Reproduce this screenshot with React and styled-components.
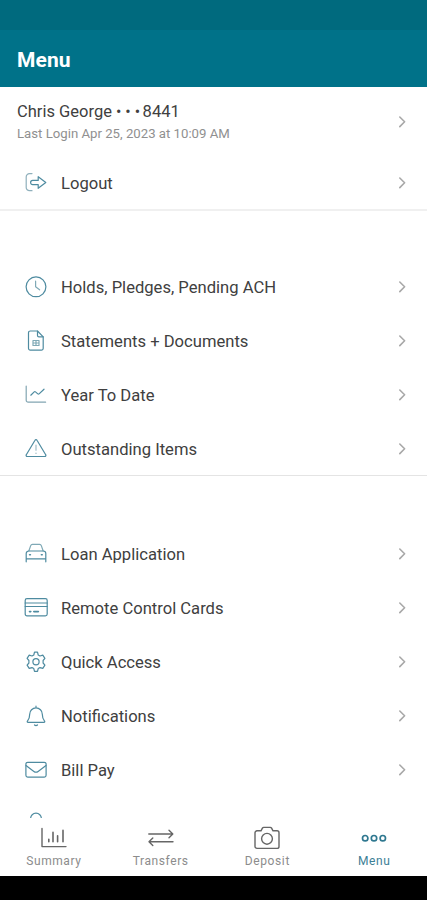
import React from 'react'
import styled, { createGlobalStyle } from 'styled-components'

const GlobalStyle = createGlobalStyle`
  * {
    box-sizing: border-box;
  }
  body {
    margin: 0;
    background: #000;
    font-family: Roboto, "Liberation Sans", sans-serif;
  }
`

const Style = {
  Screen: styled.div`
    width: 427px;
    height: 900px;
    display: flex;
    flex-direction: column;
    overflow: hidden;
    background: #fff;
  `,
  StatusBar: styled.div`
    flex: none;
    height: 30px;
    background: #006a7e;
  `,
  Header: styled.header`
    flex: none;
    height: 57px;
    padding: 2px 17px 0;
    display: flex;
    align-items: center;
    background: #007289;
  `,
  Title: styled.h1`
    margin: 0;
    font-weight: 700;
    font-size: 21px;
    line-height: 24px;
    letter-spacing: 0.1px;
    color: #fff;
  `,
  Content: styled.main`
    flex: 1;
    min-height: 0;
    overflow: hidden;
  `,
  Section: styled.section`
    padding-top: ${(props) => props.$top || 0}px;
    border-bottom: ${(props) => props.$line || 1}px solid ${(props) => (props.$line ? '#f0f0f0' : '#e4e4e4')};
    & > :last-child {
      margin-bottom: -1px;
    }
  `,
  Account: styled.div`
    height: 69px;
    padding: 0 20px 0 17px;
    display: flex;
    align-items: center;
    justify-content: space-between;
  `,
  AccountText: styled.div`
    padding-top: 3px;
  `,
  AccountName: styled.div`
    font-size: 16.5px;
    line-height: 22px;
    color: #404040;
  `,
  Dots: styled.span`
    margin: 0 -1.500px 0 4px;
    font-size: 16px;
    letter-spacing: 4px;
  `,
  LastLogin: styled.div`
    font-size: 13.2px;
    line-height: 22px;
    color: #909090;
  `,
  Row: styled.div`
    height: 54px;
    padding: 0 20px 0 24px;
    display: flex;
    align-items: center;
  `,
  Label: styled.span`
    flex: 1;
    margin-left: 13px;
    padding-top: 1px;
    font-size: 16.600px;
    line-height: 22px;
    color: #404040;
  `,
  Icon: styled.svg`
    flex: none;
    display: block;
    width: ${(props) => props.$width || 24}px;
    height: 24px;
    fill: none;
    stroke: ${(props) => props.$color || '#4e8ba0'};
    stroke-width: ${(props) => props.$stroke || 1.2};
    stroke-linecap: round;
    stroke-linejoin: round;
  `,
  TabBar: styled.nav`
    flex: none;
    height: 58px;
    display: grid;
    grid-template-columns: repeat(4, 1fr);
    background: #fff;
  `,
  Tab: styled.div`
    padding: 8px 0 0 1px;
    display: flex;
    flex-direction: column;
    align-items: center;
    font-size: 12px;
    line-height: 14px;
    letter-spacing: 0.6px;
    color: ${(props) => (props.$active ? '#3d8096' : '#8c8c8c')};
    span {
      margin-top: 4px;
    }
  `,
  SystemBar: styled.div`
    flex: none;
    height: 24px;
    background: #000;
  `,
}

const icons = {
  logout: (
    <>
      <path d="M8 2.6H5.5A3.3 3.3 0 0 0 2.2 6v10.4a3.3 3.3 0 0 0 3.3 3.3H8" stroke="#8fb0bc" />
      <path d="M8.7 9.4h5.5V5.7l7.6 5.8-7.6 5.8v-3.7H8.7a2.1 2.1 0 0 1 0-4.2z" />
    </>
  ),
  clock: (
    <>
      <circle cx="12" cy="11.8" r="9.9" />
      <path d="M11.6 6.2v5.6l4 3" stroke="#7fa9b6" />
    </>
  ),
  document: (
    <>
      <path d="M6.3 2h7.2l5.7 5.8v11.5a1.8 1.8 0 0 1-1.8 1.8H6.3a1.8 1.8 0 0 1-1.8-1.8V3.8A1.8 1.8 0 0 1 6.3 2z" />
      <path d="M13.5 2v4.4a1.4 1.4 0 0 0 1.4 1.4h4.3" />
      <path d="M9 11.5h6v5H9zM9 14h6M12 11.500v5" stroke="#7fa9b6" />
    </>
  ),
  chart: (
    <>
      <path d="M2.2 3v14.2a2 2 0 0 0 2 2h17.4" stroke="#82a5b2" />
      <path d="M6.800 12.200l3.400-3.300a1 1 0 0 1 1.300 0l2.300 2a1 1 0 0 0 1.300 0L20 6.200" />
    </>
  ),
  warning: (
    <>
      <path d="M11 3.3a1.15 1.15 0 0 1 2 0l8.7 14.4a1.15 1.15 0 0 1-1 1.8H3.3a1.15 1.15 0 0 1-1-1.8z" />
      <path d="M12 8.2v5M12 16v.4" stroke="#9dbcc6" />
    </>
  ),
  car: (
    <>
      <path d="M4.800 9l1.900-5.400a1.800 1.800 0 0 1 1.700-1.200h7.200a1.800 1.800 0 0 1 1.700 1.200L19.200 9" stroke="#7fa9b6" />
      <path d="M2.200 19.800v-8.200A2.600 2.600 0 0 1 4.800 9h14.400a2.600 2.600 0 0 1 2.600 2.600v8.200M2.200 16.800h19.600" />
      <path d="M5.600 12.700h.8M17.400 12.700h.8" strokeWidth="1.6" />
    </>
  ),
  card: (
    <>
      <rect x="1.2" y="2.6" width="22" height="17.2" rx="1.8" />
      <path d="M1.2 7h22M1.2 10.5h22" />
      <path d="M5.5 15.6h1.3M9.8 15.6h4.6" strokeWidth="1.6" />
    </>
  ),
  gear: (
    <>
      <circle cx="12" cy="11.8" r="3.1" />
      <path d="M10.5 2.2h3l.7 2.8 1.8 1 2.8-.8 2.1 3.2-1.8 2.1v2.5l1.8 2.2-2.1 3.2-2.8-.8-1.8 1-.7 2.8h-3l-.7-2.800-1.800-1-2.800.800-2.100-3.200L4.900 13v-2.500L3.100 8.400l2.100-3.200L8 6l1.800-1z" />
    </>
  ),
  bell: (
    <>
      <path d="M12 2.200v1.200M3.400 17.200c1.500-1.800 2.300-2.700 2.300-7a6.300 6.300 0 0 1 12.600 0c0 4.300.8 5.200 2.300 7 .4.6.1 1.200-.6 1.200H4c-.7 0-1-.6-.6-1.200z" />
      <path d="M10.500 21a1.800 1 0 0 0 3 0" />
    </>
  ),
  mail: (
    <>
      <rect x="1.9" y="4.3" width="20.2" height="14.8" rx="1.8" />
      <path d="M2 7.600l7.900 5.800a3.500 3.500 0 0 0 4.200 0L22 7.600" />
    </>
  ),
  person: (
    <>
      <circle cx="12" cy="6.600" r="5.400" />
      <path d="M3 22a9 9 0 0 1 18 0" />
    </>
  ),
}

const tabIcons = {
  summary: (
    <>
      <path d="M1 2.4v18.2h24" />
      <path d="M7.8 13.2v2.6M12 6.4v9.4M16.6 9.8v6M22 4.4v11.4" strokeWidth="1.6" />
    </>
  ),
  transfers: (
    <path d="M.8 8h23.8M21 4.200L24.800 8 21 11.800M25 15.800H1.200M4.800 12L1 15.800l3.800 3.800" />
  ),
  deposit: (
    <>
      <path d="M3 4.8h4l1.4-2.6a1.6 1.6 0 0 1 1.4-.8h6.400a1.6 1.6 0 0 1 1.4.8L19 4.8h4a2 2 0 0 1 2 2v13.600a2 2 0 0 1-2 2H3a2 2 0 0 1-2-2V6.800a2 2 0 0 1 2-2z" />
      <circle cx="13" cy="12.8" r="5.4" />
    </>
  ),
  menu: (
    <>
      <circle cx="4.2" cy="12.2" r="2.7" />
      <circle cx="13" cy="12.2" r="2.7" />
      <circle cx="21.8" cy="12.2" r="2.7" />
    </>
  ),
}

const accountItems = [
  { icon: 'clock', label: 'Holds, Pledges, Pending ACH' },
  { icon: 'document', label: 'Statements + Documents' },
  { icon: 'chart', label: 'Year To Date' },
  { icon: 'warning', label: 'Outstanding Items' },
]

const serviceItems = [
  { icon: 'car', label: 'Loan Application' },
  { icon: 'card', label: 'Remote Control Cards' },
  { icon: 'gear', label: 'Quick Access' },
  { icon: 'bell', label: 'Notifications' },
  { icon: 'mail', label: 'Bill Pay' },
  { icon: 'person', label: '' },
]

const tabs = [
  { icon: 'summary', label: 'Summary' },
  { icon: 'transfers', label: 'Transfers' },
  { icon: 'deposit', label: 'Deposit' },
  { icon: 'menu', label: 'Menu', active: true },
]

function Chevron() {
  return (
    <Style.Icon $width={10} $color="#a8a8a8" $stroke={1.6} viewBox="0 0 10 24">
      <path d="M2.8 7l4.800 4.800-4.800 4.800" />
    </Style.Icon>
  )
}

function MenuRow({ icon, label }) {
  return (
    <Style.Row>
      <Style.Icon viewBox="0 0 24 24">{icons[icon]}</Style.Icon>
      <Style.Label>{label}</Style.Label>
      <Chevron />
    </Style.Row>
  )
}

function App() {
  return (
    <Style.Screen>
      <GlobalStyle />
      <Style.StatusBar />
      <Style.Header>
        <Style.Title>Menu</Style.Title>
      </Style.Header>
      <Style.Content>
        <Style.Section $line={2}>
          <Style.Account>
            <Style.AccountText>
              <Style.AccountName>
                Chris George<Style.Dots>•••</Style.Dots>8441
              </Style.AccountName>
              <Style.LastLogin>Last Login Apr 25, 2023 at 10:09 AM</Style.LastLogin>
            </Style.AccountText>
            <Chevron />
          </Style.Account>
          <MenuRow icon="logout" label="Logout" />
        </Style.Section>
        <Style.Section $top={49}>
          {accountItems.map((item) => (
            <MenuRow key={item.icon} {...item} />
          ))}
        </Style.Section>
        <Style.Section $top={51}>
          {serviceItems.map((item) => (
            <MenuRow key={item.icon} {...item} />
          ))}
        </Style.Section>
      </Style.Content>
      <Style.TabBar>
        {tabs.map((tab) => (
          <Style.Tab key={tab.icon} $active={tab.active}>
            <Style.Icon
              $width={26}
              $color={tab.active ? '#2f7890' : '#666'}
              $stroke={tab.active ? 1.7 : 1.4}
              viewBox="0 0 26 24"
            >
              {tabIcons[tab.icon]}
            </Style.Icon>
            <span>{tab.label}</span>
          </Style.Tab>
        ))}
      </Style.TabBar>
      <Style.SystemBar />
    </Style.Screen>
  )
}

export default App
